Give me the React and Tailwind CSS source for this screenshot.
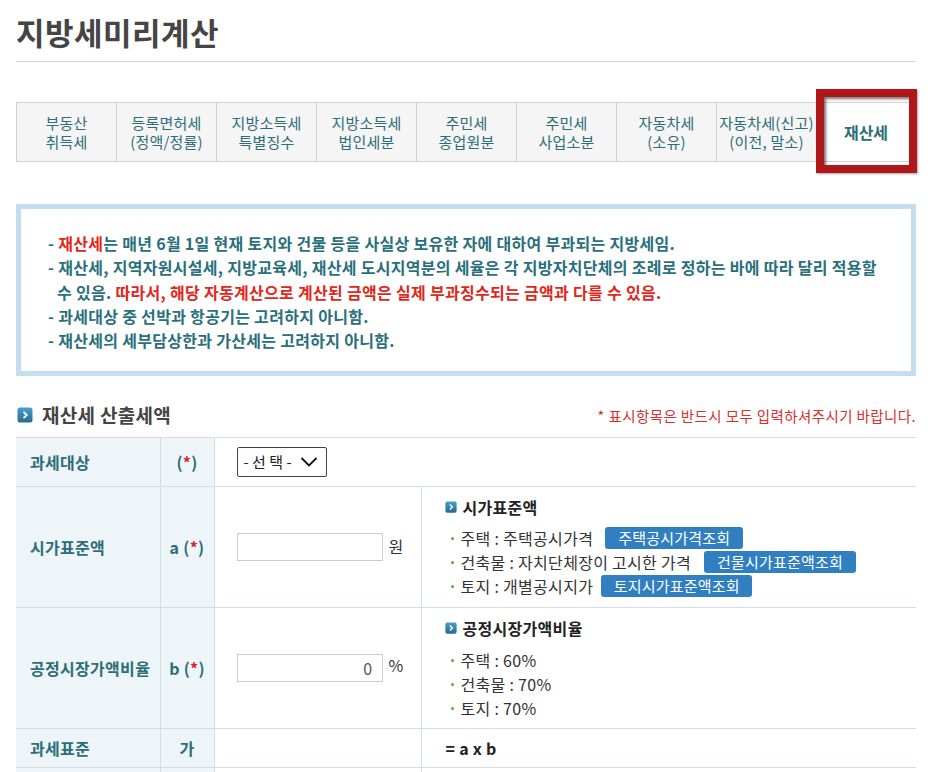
import React from "react";

const tabs = [
  ["부동산", "취득세"],
  ["등록면허세", "(정액/정률)"],
  ["지방소득세", "특별징수"],
  ["지방소득세", "법인세분"],
  ["주민세", "종업원분"],
  ["주민세", "사업소분"],
  ["자동차세", "(소유)"],
  ["자동차세(신고)", "(이전, 말소)"],
];

const font = { fontFamily: '"Noto Sans CJK KR", "Noto Sans", sans-serif' };

const BoxIcon = ({ size = 16 }) => (
  <svg width={size} height={size} viewBox="0 0 16 16" className="shrink-0">
    <defs>
      <linearGradient id={`g${size}`} x1="0" y1="0" x2="0" y2="1">
        <stop offset="0" stopColor="#4b9fce" />
        <stop offset="1" stopColor="#24698f" />
      </linearGradient>
    </defs>
    <rect x="0.5" y="0.5" width="15" height="15" rx="2.5" fill={`url(#g${size})`} />
    <path d="M6.5 4.8 L9.8 8 L6.5 11.2" stroke="#fff" strokeWidth="1.8" fill="none" />
  </svg>
);

const Bullet = ({ children }) => (
  <div className="flex items-center h-6">
    <span className="w-[3px] h-[3px] rounded-full bg-[#6b9e3f] mr-[7px] ml-[6px]" />
    {children}
  </div>
);

const LinkButton = ({ label, className }) => (
  <span
    className={`inline-flex items-center justify-center h-[22px] rounded-[3px] bg-[#2f7fc1] text-white text-[15px] tracking-[0.2px] ${className}`}
  >
    {label}
  </span>
);

const App = () => {
  return (
    <div className="w-[936px] min-h-[772px] bg-white" style={font}>
      <div className="pl-4 pr-5 pt-[12px]">
        <h1 className="text-[31px] font-bold text-[#454545] tracking-[0.5px] leading-[40px] pb-[9px] border-b border-[#d8d8d8]">
          지방세미리계산
        </h1>

        <div className="mt-[40px] grid grid-cols-9 border-t border-b border-[#d2d2d2] h-[60px]">
          {tabs.map(([a, b], i) => (
            <div
              key={i}
              className="flex flex-col items-center justify-center bg-[#f5f5f5] border-l border-[#d2d2d2] text-[15px] leading-[19px] text-[#2c6d78] tracking-[0.2px] whitespace-nowrap"
            >
              <span>{a}</span>
              <span>{b}</span>
            </div>
          ))}
          <div className="relative flex items-center justify-center bg-white border-l border-r border-[#d2d2d2] text-[16px] font-bold text-[#2c6d78]">
            재산세
            <div className="absolute left-[-1px] right-[-2px] top-[-14px] bottom-[-12px] border-[8px] border-[#b0171b] shadow-[inset_2px_2px_3px_rgba(0,0,0,0.55),1px_1px_2px_rgba(0,0,0,0.35)]" />
          </div>
        </div>

        <div className="mt-[42px] border-[5px] border-[#c4ddef] pl-[27px] pt-[22px] pb-[19px] text-[16px] leading-[24.3px] font-bold text-[#29707c] tracking-[0.3px] whitespace-nowrap">
          <p>
            - <span className="text-[#e1261c]">재산세</span>는 매년 6월 1일 현재 토지와 건물 등을 사실상 보유한 자에 대하여 부과되는 지방세임.
          </p>
          <p>
            - 재산세, 지역자원시설세, 지방교육세, 재산세 도시지역분의 세율은 각 지방자치단체의 조례로 정하는 바에 따라 달리 적용할
          </p>
          <p className="pl-[9px]">
            수 있음. <span className="text-[#e1261c]">따라서, 해당 자동계산으로 계산된 금액은 실제 부과징수되는 금액과 다를 수 있음.</span>
          </p>
          <p>- 과세대상 중 선박과 항공기는 고려하지 아니함.</p>
          <p>- 재산세의 세부담상한과 가산세는 고려하지 아니함.</p>
        </div>

        <div className="mt-[28px] flex items-center justify-between h-[22px]">
          <div className="flex items-center gap-[9px] pl-[1px]">
            <BoxIcon size={16} />
            <span className="text-[19px] font-bold text-[#444] tracking-[0.3px]">재산세 산출세액</span>
          </div>
          <span className="text-[14.5px] text-[#d9302a] tracking-[0.4px]">* 표시항목은 반드시 모두 입력하셔주시기 바랍니다.</span>
        </div>

        <table className="mt-[11px] w-full border-collapse table-fixed text-[16px] tracking-[0.3px]">
          <colgroup>
            <col className="w-[144px]" />
            <col className="w-[54px]" />
            <col className="w-[207px]" />
            <col />
          </colgroup>
          <tbody>
            <tr className="h-[49px]">
              <td className="bg-[#eef5f8] border-t border-b border-r border-[#d3dde2] pl-[14px] font-bold text-[#2c6d78]">
                과세대상
              </td>
              <td className="bg-[#eef5f8] border border-[#d3dde2] text-center font-bold text-[#2c6d78]">
                (<span className="text-[#d9262a]">*</span>)
              </td>
              <td colSpan={2} className="border-t border-b border-[#d3dde2] pl-[22px]">
                <div className="inline-flex items-center gap-[8px] h-[30px] w-[90px] border border-[#444] rounded-[2px] pl-[6px] text-[15px] text-[#222] tracking-normal">
                  <span>- 선 택 -</span>
                  <svg width="18" height="12" viewBox="0 0 18 12">
                    <path d="M1.5 2 L9 9.5 L16.5 2" stroke="#111" strokeWidth="1.8" fill="none" />
                  </svg>
                </div>
              </td>
            </tr>
            <tr className="h-[121px]">
              <td className="bg-[#eef5f8] border-b border-r border-[#d3dde2] pl-[14px] font-bold text-[#2c6d78]">
                시가표준액
              </td>
              <td className="bg-[#eef5f8] border-b border-r border-[#d3dde2] text-center font-bold text-[#2c6d78]">
                a (<span className="text-[#d9262a]">*</span>)
              </td>
              <td className="border-b border-r border-[#d3dde2] pl-[22px]">
                <div className="flex items-center gap-[6px]">
                  <div className="w-[146px] h-[28px] border border-[#ccc] bg-white" />
                  <span className="text-[16px] text-[#333] -mt-[2px]">원</span>
                </div>
              </td>
              <td className="border-b border-[#d3dde2] pl-[23px] align-top pt-[9px] text-[#333] whitespace-nowrap">
                <div className="flex items-center gap-[6px] h-[22px] font-bold text-[#222]">
                  <BoxIcon size={12} />
                  <span>시가표준액</span>
                </div>
                <div className="mt-[8px]">
                  <Bullet>
                    주택 : 주택공시가격
                    <LinkButton label="주택공시가격조회" className="ml-[12px] w-[138px]" />
                  </Bullet>
                  <Bullet>
                    건축물 : 자치단체장이 고시한 가격
                    <LinkButton label="건물시가표준액조회" className="ml-[13px] w-[152px]" />
                  </Bullet>
                  <Bullet>
                    토지 : 개별공시지가
                    <LinkButton label="토지시가표준액조회" className="ml-[8px] w-[151px]" />
                  </Bullet>
                </div>
              </td>
            </tr>
            <tr className="h-[121px]">
              <td className="bg-[#eef5f8] border-b border-r border-[#d3dde2] pl-[14px] font-bold text-[#2c6d78] whitespace-nowrap">
                공정시장가액비율
              </td>
              <td className="bg-[#eef5f8] border-b border-r border-[#d3dde2] text-center font-bold text-[#2c6d78]">
                b (<span className="text-[#d9262a]">*</span>)
              </td>
              <td className="border-b border-r border-[#d3dde2] pl-[22px]">
                <div className="flex items-center gap-[6px]">
                  <div className="w-[146px] h-[28px] border border-[#ccc] bg-white flex items-center justify-end pr-[9px] text-[16px] text-[#555]">
                    0
                  </div>
                  <span className="text-[16px] text-[#333] -mt-[6px]">%</span>
                </div>
              </td>
              <td className="border-b border-[#d3dde2] pl-[23px] align-top pt-[9px] text-[#333]">
                <div className="flex items-center gap-[6px] h-[22px] font-bold text-[#222]">
                  <BoxIcon size={12} />
                  <span>공정시장가액비율</span>
                </div>
                <div className="mt-[9px]">
                  <Bullet>주택 : 60%</Bullet>
                  <Bullet>건축물 : 70%</Bullet>
                  <Bullet>토지 : 70%</Bullet>
                </div>
              </td>
            </tr>
            <tr className="h-[39px]">
              <td className="bg-[#eef5f8] border-b border-r border-[#d3dde2] pl-[14px] font-bold text-[#2c6d78]">
                과세표준
              </td>
              <td className="bg-[#eef5f8] border-b border-r border-[#d3dde2] text-center font-bold text-[#2c6d78]">
                가
              </td>
              <td className="border-b border-r border-[#d3dde2]" />
              <td className="border-b border-[#d3dde2] pl-[24px] font-bold text-[#222]">= a x b</td>
            </tr>
            <tr className="h-[39px]">
              <td className="bg-[#eef5f8] border-r border-[#d3dde2]" />
              <td className="bg-[#eef5f8] border-r border-[#d3dde2]" />
              <td className="border-r border-[#d3dde2]" />
              <td />
            </tr>
          </tbody>
        </table>
      </div>
    </div>
  );
};

export default App;
